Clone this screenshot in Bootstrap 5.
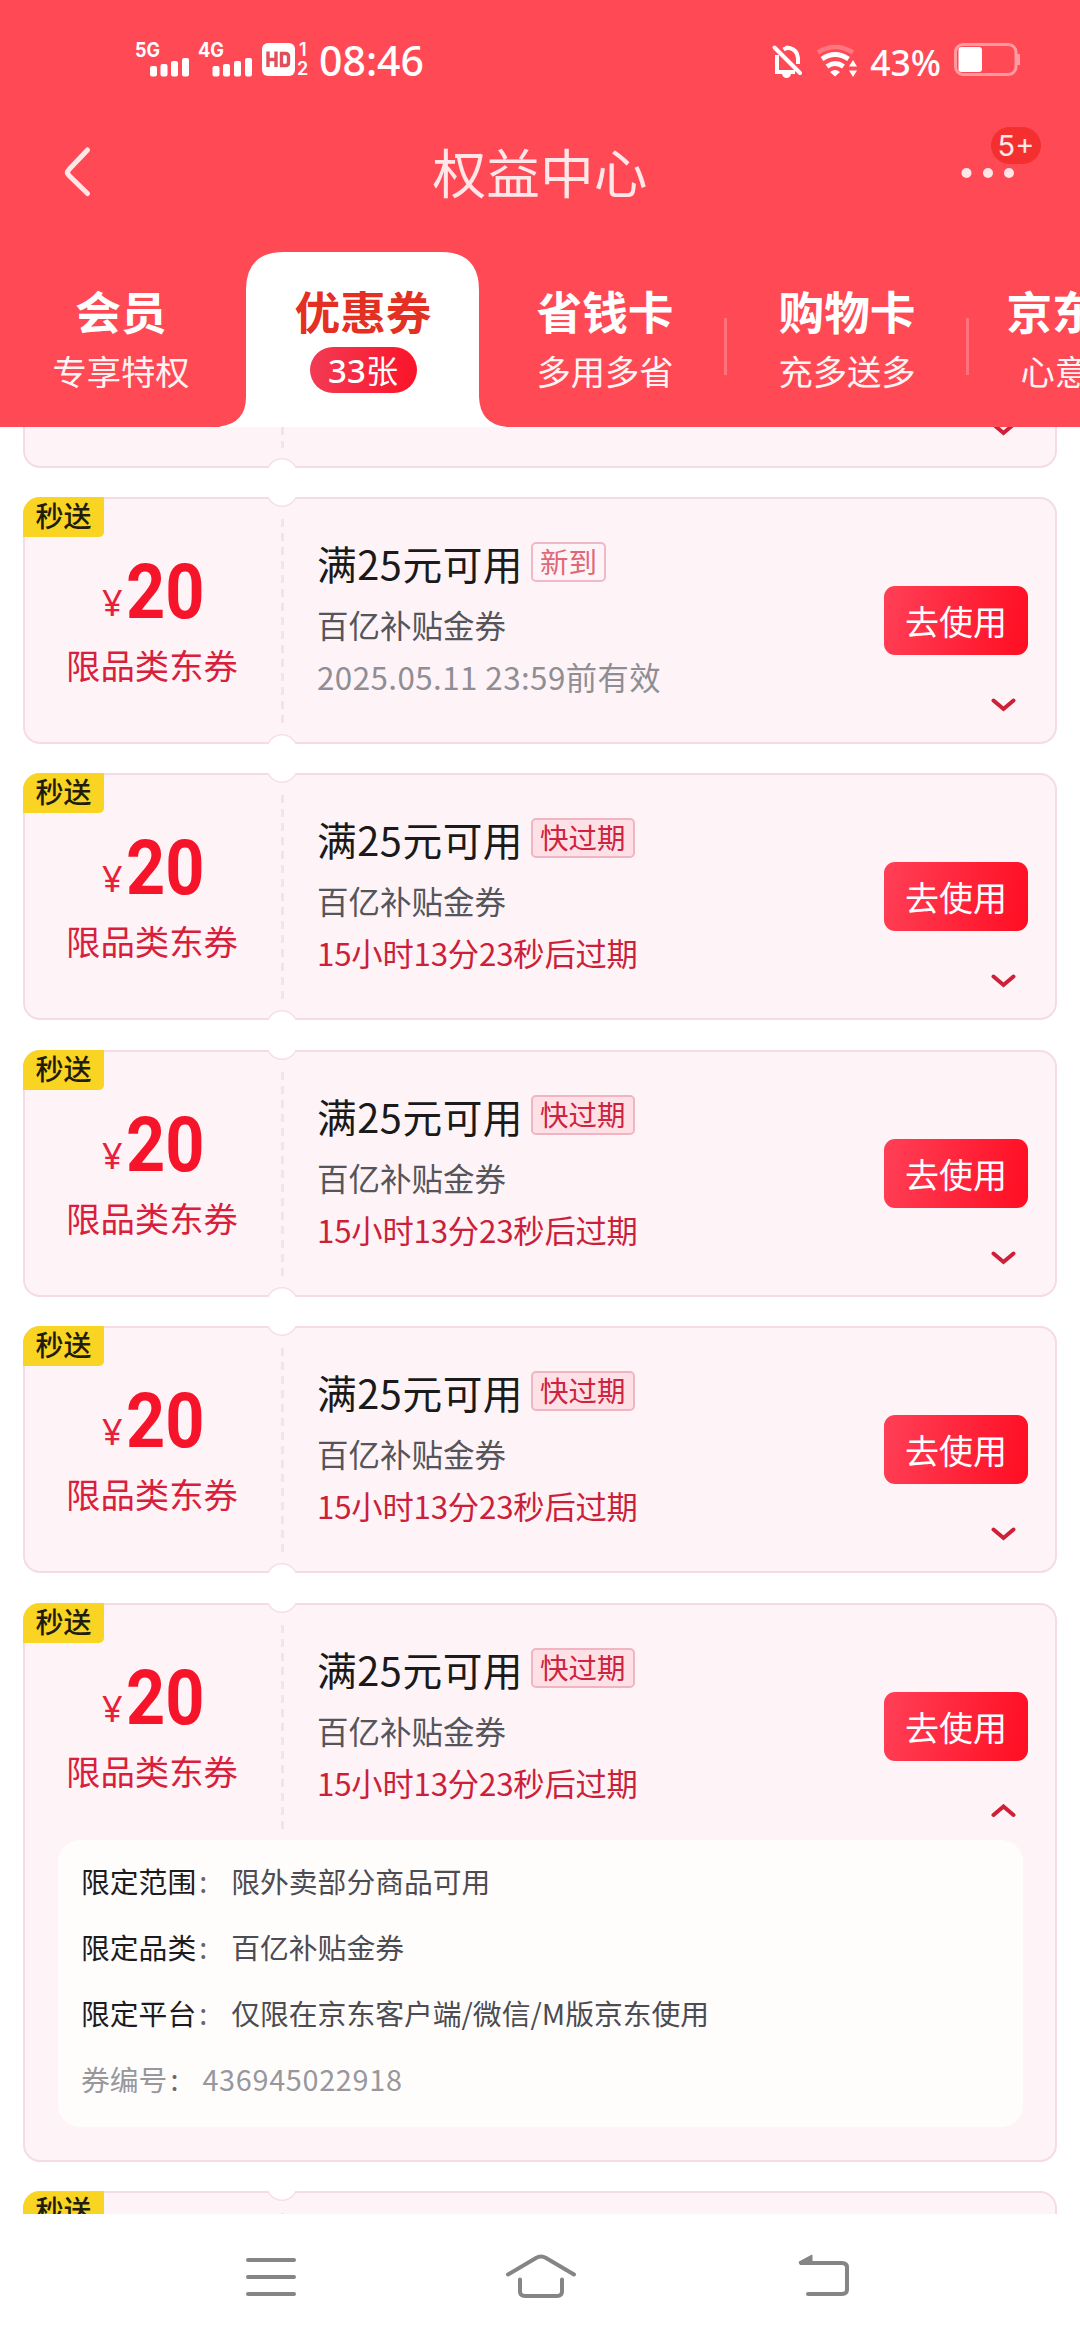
<!DOCTYPE html>
<html lang="zh-CN">
<head>
<meta charset="utf-8">
<meta name="viewport" content="width=device-width, initial-scale=1">
<title>权益中心</title>
<link href="https://cdn.jsdelivr.net/npm/bootstrap@5.3.0/dist/css/bootstrap.min.css" rel="stylesheet">
<style>
body{font-family:"Noto Sans CJK SC",sans-serif;background:#fff;height:2340px;overflow:hidden;line-height:1;color:#1a1a1a}
svg{display:block;flex:none}
.top-area{background:#ff4a56;height:427px;overflow:hidden;flex:none}
.status-bar{height:80px;padding:0 56px 0 132px}
.clock-text{font-family:"Noto Sans",sans-serif;font-size:41px;font-weight:500;margin-left:9px;margin-top:38px;line-height:44px}
.pct-text{font-family:"Noto Sans",sans-serif;font-size:35.5px;font-weight:500;line-height:36px;margin:44px 13px 0 10px}
.title-bar{height:172px;padding:0 60px}
.title-bar h1{font-size:53.7px;font-weight:400;color:#ffe6e8;line-height:60px;margin:61px 0 0}
.more-btn{width:57px;height:60px}
.more-count{left:28px;top:-1px;width:50px;height:37px;border-radius:19px;background:#f42f2f;color:#ffe9ea;font-size:29px;line-height:38px;font-family:Inter,sans-serif}
.tab-strip{height:175px;width:1210px}
.tab-cell{width:242px;height:175px;padding-top:34px}
.tab-cell b{font-size:45.7px;line-height:48px;font-weight:700;white-space:nowrap}
.tab-cell small{font-size:34.3px;line-height:40px;margin-top:16px;white-space:nowrap;color:#fff4f4}
.tab-on{color:#e33022}
.tab-on .tab-shape{left:-22px;top:0}
.tab-pill{width:107px;height:46px;border-radius:23px;margin-top:13px;background:linear-gradient(90deg,#f23b54,#fb1429);color:#fff;font-size:32px;line-height:45px}
.tab-pill i{font-style:normal;font-family:"Noto Sans",sans-serif;font-weight:500;font-size:33px}
.tab-rule{right:-1px;top:66px;width:3px;height:57px;background:#ff727b}
.coupon-list{flex:1 1 0;min-height:0;overflow:hidden;padding:0 23px}
.coupon{background:#fef4f7;border:2px solid #f5dce3;border-radius:17px;margin-bottom:29.4px;flex:none}
.coupon-tail{height:41px;border-top:0;border-radius:0 0 17px 17px;margin-bottom:29px}
.coupon-main{height:243px}
.notch{left:241px;width:32px;height:12px}
.notch-t{top:-2px;background:radial-gradient(circle at 50% -6px,#fff 14px,#f6dfe5 15px,#f6dfe5 15.6px,transparent 16.4px)}
.notch-b{bottom:-2px;background:radial-gradient(circle at 50% 18px,#fff 14px,#f6dfe5 15px,#f6dfe5 15.6px,transparent 16.4px)}
.coupon-left{width:258px}
.perf{width:3px;height:208px;margin-top:20px;margin-left:-2px;background:repeating-linear-gradient(#f9e2e7 0 8px,transparent 8px 14px);flex:none}
.fast-tag{left:-2px;top:-2px;width:81px;height:40px;border-radius:17px 0 5px 0;background:#f9d423;color:#221c0c;font-size:28px;font-weight:500;line-height:36px;text-align:center}
.amount-row{height:56px;margin-top:65px;margin-left:77px;color:#f5142a}
.amount-row span{font-size:36px;line-height:36px;width:24px;font-family:"Noto Sans",sans-serif;color:#e8203a;margin-bottom:-1px}
.amount-row strong{font-family:Roboto,sans-serif;font-weight:700;font-size:76px;line-height:56px;transform:scaleX(.9);transform-origin:0 50%}
.kind-text{font-size:34.4px;line-height:40px;margin-top:24px;margin-left:41px;color:#d8203c}
.coupon-info{padding-left:33px;padding-top:43px;flex:1}
.cond-text{font-size:39.7px;line-height:42px;letter-spacing:.55px}
.state-tag{height:40px;border:2px solid #efb9c6;border-radius:5px;font-size:28.5px;line-height:33px;padding:0 7px;margin-left:8px;color:#de6878}
.state-hot{background:#fde1e7;color:#cf2440;border-color:#efb5c3}
.name-text{font-size:31.5px;line-height:36px;margin-top:22px;color:#55555b}
.when-text{font-size:31.3px;line-height:36px;margin-top:17px;color:#8e8e94;white-space:nowrap;letter-spacing:.45px}
.when-text.is-soon{color:#cc1f3a;letter-spacing:-.2px}
.coupon-act{width:144px;margin-right:27px;padding-top:87px}
.btn-use,.btn-use:hover{width:144px;height:69px;border:0;border-radius:11px;background:linear-gradient(100deg,#ff4057,#ff0d22);color:#fff;font-size:34px;line-height:63px;padding:0}
.fold{margin:43px 12px 0 0}
.rule-box{background:#fffdfc;border-radius:22px;margin:-8px 32px 33px 33px;height:287px;padding:11px 24px 0 23px}
.rule-box dl{height:66px;margin:0;line-height:60px;font-size:28.8px}
.rule-box dt{font-weight:400;color:#1c1c1e;white-space:nowrap}
.rule-box dd{margin:0;color:#4c4c52;white-space:nowrap}
.rule-box .dim{color:#97979c}
.rule-box dd.code-no{letter-spacing:.7px}
.rule-box .colon{width:35px;padding-left:3px;flex:none;overflow:hidden;color:#66666a}
.sys-nav{height:126px;flex:none;background:#fff;padding:0 226px 0 246px}
.nav-home{margin-right:12px}
</style>
</head>
<body class="d-flex flex-column">
<svg width="0" height="0" class="position-absolute"><defs>
<symbol id="down" viewBox="0 0 25 14"><path d="M2.5 2.5 12.5 11 22.5 2.5" fill="none" stroke="#cf2038" stroke-width="4" stroke-linecap="round"/></symbol>
<symbol id="up" viewBox="0 0 25 14"><path d="M2.5 11 12.5 2.5 22.5 11" fill="none" stroke="#cf2038" stroke-width="4" stroke-linecap="round"/></symbol>
</defs></svg>

<header class="top-area text-white">
  <div class="status-bar d-flex align-items-start">
    <svg width="178" height="80" viewBox="132 0 178 80" fill="#fff">
      <g font-family="Inter, sans-serif" font-weight="700" font-size="19.5"><text x="135" y="57" textLength="25" lengthAdjust="spacingAndGlyphs">5G</text><text x="198" y="57" textLength="26" lengthAdjust="spacingAndGlyphs">4G</text></g>
      <rect x="150" y="66" width="7" height="10.5" rx="2"/><rect x="160.500" y="64" width="7" height="12.500" rx="2"/><rect x="171" y="61" width="7" height="15.500" rx="2"/><rect x="182" y="58" width="7" height="18.500" rx="2"/>
      <rect x="212.500" y="66" width="7" height="10.500" rx="2"/><rect x="223" y="64" width="7" height="12.500" rx="2"/><rect x="234" y="61" width="7" height="15.500" rx="2"/><rect x="245" y="58" width="7" height="18.500" rx="2"/>
      <rect x="262" y="43" width="33" height="33" rx="6"/>
      <path d="M268 51.500v15.500M276 51.500v15.500M268 59.500h8M281.500 53.500h4q3 0 3 3v6q0 3-3 3h-4z" fill="none" stroke="#e0505c" stroke-width="3.400"/>
      <g font-family="Inter, sans-serif" font-weight="600" font-size="18"><text x="299" y="56">1</text><text x="297" y="75">2</text></g>
    </svg>
    <div class="clock-text">08:46</div>
    <svg class="ms-auto" width="90" height="80" viewBox="769 0 90 80">
      <g fill="none" stroke="#fff" stroke-width="4"><path d="M773.500 47.500 799 73" stroke-linecap="round"/><path d="M776 55v17h18M782.500 49.500q3-2 6-1.500q7.500 1.500 8.500 10v6"/></g>
      <path d="M784 47q2-2.500 4-.500l1 3h-5zM781 74h9q-1 4-4.500 4t-4.500-4z" fill="#fff"/>
      <path d="M817 52.500q17-11 35 0" fill="none" stroke="#ff7781" stroke-width="4.500"/>
      <path d="M821 59q13-9 26.500 0M826 66.500q8-6 16.500 0" fill="none" stroke="#fff" stroke-width="4.800"/>
      <path d="M829 72q5-4 10 0l-5 4.500zM852 60l4 6.500h-8zM852 77l-4-6.500h8z" fill="#fff"/>
    </svg>
    <div class="pct-text">43%</div>
    <svg width="70" height="80" viewBox="954 0 70 80"><rect x="955.500" y="44.500" width="60.500" height="30" rx="7.500" fill="none" stroke="#ff9aa1" stroke-width="3"/><rect x="958.500" y="47" width="23.500" height="25" rx="3" fill="#fff"/><path d="M1018.500 54v11" stroke="#ff9aa1" stroke-width="3"/></svg>
  </div>
  <div class="title-bar d-flex justify-content-between align-items-start">
    <svg class="mt-5" width="57" height="90" viewBox="60 128 57 90"><path d="M87.500 150 69 169.500q-3 3 0 6L87.500 193.500" fill="none" stroke="#ffe6e8" stroke-width="5" stroke-linecap="round"/></svg>
    <h1>权益中心</h1>
    <div class="more-btn position-relative mt-5 pt-3">
      <svg class="overflow-visible" width="57" height="60" viewBox="963 144 57 60" fill="#ffe6e8"><circle cx="966.500" cy="173" r="5"/><circle cx="988" cy="173" r="5"/><circle cx="1009" cy="173" r="5"/></svg>
      <div class="more-count position-absolute text-center">5+</div>
    </div>
  </div>
  <nav class="tab-strip d-flex">
    <div class="tab-cell d-flex flex-column align-items-center"><b>会员</b><small>专享特权</small></div>
    <div class="tab-cell tab-on d-flex flex-column align-items-center position-relative">
      <svg class="tab-shape position-absolute" width="286" height="176" viewBox="220 252 286 176"><path d="M216 428V427Q246 425 246 397V290Q246 252 284 252H441Q479 252 479 290V397Q480 425 508 427V428Z" fill="#fff"/></svg>
      <b class="position-relative">优惠券</b><span class="tab-pill position-relative text-center"><i>33</i>张</span></div>
    <div class="tab-cell d-flex flex-column align-items-center position-relative"><b>省钱卡</b><small>多用多省</small><span class="tab-rule position-absolute"></span></div>
    <div class="tab-cell d-flex flex-column align-items-center position-relative"><b>购物卡</b><small>充多送多</small><span class="tab-rule position-absolute"></span></div>
    <div class="tab-cell d-flex flex-column align-items-center"><b>京东E卡</b><small>心意礼品</small></div>
  </nav>
</header>

<main class="coupon-list d-flex flex-column">
  <section class="coupon coupon-tail position-relative d-flex">
    <div class="coupon-left"></div><div class="perf" style="height:21px;margin-top:0"></div>
    <svg class="ms-auto" style="margin:-5px 39px 0 0" width="25" height="14"><use href="#down"/></svg>
    <span class="notch notch-b position-absolute"></span>
  </section>

  <section class="coupon position-relative">
    <span class="notch notch-t position-absolute"></span><span class="notch notch-b position-absolute"></span><span class="fast-tag position-absolute">秒送</span>
    <div class="coupon-main d-flex">
      <div class="coupon-left"><div class="amount-row d-flex align-items-end"><span>¥</span><strong>20</strong></div><div class="kind-text">限品类东券</div></div>
      <div class="perf"></div>
      <div class="coupon-info"><div class="d-flex"><div class="cond-text">满25元可用</div><div class="state-tag">新到</div></div><div class="name-text">百亿补贴金券</div><div class="when-text">2025.05.11 23:59前有效</div></div>
      <div class="coupon-act d-flex flex-column align-items-end"><button class="btn btn-use">去使用</button><svg class="fold" width="25" height="14"><use href="#down"/></svg></div>
    </div>
  </section>

  <section class="coupon position-relative">
    <span class="notch notch-t position-absolute"></span><span class="notch notch-b position-absolute"></span><span class="fast-tag position-absolute">秒送</span>
    <div class="coupon-main d-flex">
      <div class="coupon-left"><div class="amount-row d-flex align-items-end"><span>¥</span><strong>20</strong></div><div class="kind-text">限品类东券</div></div>
      <div class="perf"></div>
      <div class="coupon-info"><div class="d-flex"><div class="cond-text">满25元可用</div><div class="state-tag state-hot">快过期</div></div><div class="name-text">百亿补贴金券</div><div class="when-text is-soon">15小时13分23秒后过期</div></div>
      <div class="coupon-act d-flex flex-column align-items-end"><button class="btn btn-use">去使用</button><svg class="fold" width="25" height="14"><use href="#down"/></svg></div>
    </div>
  </section>

  <section class="coupon position-relative">
    <span class="notch notch-t position-absolute"></span><span class="notch notch-b position-absolute"></span><span class="fast-tag position-absolute">秒送</span>
    <div class="coupon-main d-flex">
      <div class="coupon-left"><div class="amount-row d-flex align-items-end"><span>¥</span><strong>20</strong></div><div class="kind-text">限品类东券</div></div>
      <div class="perf"></div>
      <div class="coupon-info"><div class="d-flex"><div class="cond-text">满25元可用</div><div class="state-tag state-hot">快过期</div></div><div class="name-text">百亿补贴金券</div><div class="when-text is-soon">15小时13分23秒后过期</div></div>
      <div class="coupon-act d-flex flex-column align-items-end"><button class="btn btn-use">去使用</button><svg class="fold" width="25" height="14"><use href="#down"/></svg></div>
    </div>
  </section>

  <section class="coupon position-relative">
    <span class="notch notch-t position-absolute"></span><span class="notch notch-b position-absolute"></span><span class="fast-tag position-absolute">秒送</span>
    <div class="coupon-main d-flex">
      <div class="coupon-left"><div class="amount-row d-flex align-items-end"><span>¥</span><strong>20</strong></div><div class="kind-text">限品类东券</div></div>
      <div class="perf"></div>
      <div class="coupon-info"><div class="d-flex"><div class="cond-text">满25元可用</div><div class="state-tag state-hot">快过期</div></div><div class="name-text">百亿补贴金券</div><div class="when-text is-soon">15小时13分23秒后过期</div></div>
      <div class="coupon-act d-flex flex-column align-items-end"><button class="btn btn-use">去使用</button><svg class="fold" width="25" height="14"><use href="#down"/></svg></div>
    </div>
  </section>

  <section class="coupon position-relative">
    <span class="notch notch-t position-absolute"></span><span class="fast-tag position-absolute">秒送</span>
    <div class="coupon-main d-flex">
      <div class="coupon-left"><div class="amount-row d-flex align-items-end"><span>¥</span><strong>20</strong></div><div class="kind-text">限品类东券</div></div>
      <div class="perf"></div>
      <div class="coupon-info"><div class="d-flex"><div class="cond-text">满25元可用</div><div class="state-tag state-hot">快过期</div></div><div class="name-text">百亿补贴金券</div><div class="when-text is-soon">15小时13分23秒后过期</div></div>
      <div class="coupon-act d-flex flex-column align-items-end"><button class="btn btn-use">去使用</button><svg class="fold" width="25" height="14"><use href="#up"/></svg></div>
    </div>
    <div class="rule-box position-relative">
      <dl class="d-flex"><dt>限定范围</dt><dt class="colon">:</dt><dd>限外卖部分商品可用</dd></dl>
      <dl class="d-flex"><dt>限定品类</dt><dt class="colon">:</dt><dd>百亿补贴金券</dd></dl>
      <dl class="d-flex"><dt>限定平台</dt><dt class="colon">:</dt><dd>仅限在京东客户端/微信/M版京东使用</dd></dl>
      <dl class="d-flex"><dt class="dim">券编号</dt><dt class="dim colon">:</dt><dd class="dim code-no">436945022918</dd></dl>
    </div>
  </section>

  <section class="coupon position-relative">
    <span class="notch notch-t position-absolute"></span><span class="fast-tag position-absolute">秒送</span>
    <div class="coupon-main d-flex"><div class="coupon-left"></div><div class="perf"></div></div>
  </section>
</main>

<footer class="sys-nav d-flex justify-content-between">
  <svg width="50" height="126" viewBox="246 2214 50 126"><path d="M248 2260h46M248 2277h46M248 2294h46" stroke="#858585" stroke-width="4" stroke-linecap="round"/></svg>
  <svg class="nav-home" width="72" height="126" viewBox="505 2214 72 126" fill="none" stroke="#858585" stroke-width="4" stroke-linecap="round"><path d="M508 2274.500 536 2258Q541 2255 546 2258L574 2274.500M520 2279.500v12q0 4.500 5 4.500h32q5 0 5-4.500v-12"/></svg>
  <svg width="56" height="126" viewBox="798 2214 56 126"><path d="M802 2263h40q5 0 5 4.500v22q0 4.500-5 4.500h-34" fill="none" stroke="#858585" stroke-width="4" stroke-linecap="round"/><path d="M799 2262 812 2255v9.500h-12z" fill="#858585" stroke="#858585" stroke-linejoin="round"/></svg>
</footer>
<script src="https://cdn.jsdelivr.net/npm/bootstrap@5.3.0/dist/js/bootstrap.bundle.min.js"></script>
</body>
</html>
